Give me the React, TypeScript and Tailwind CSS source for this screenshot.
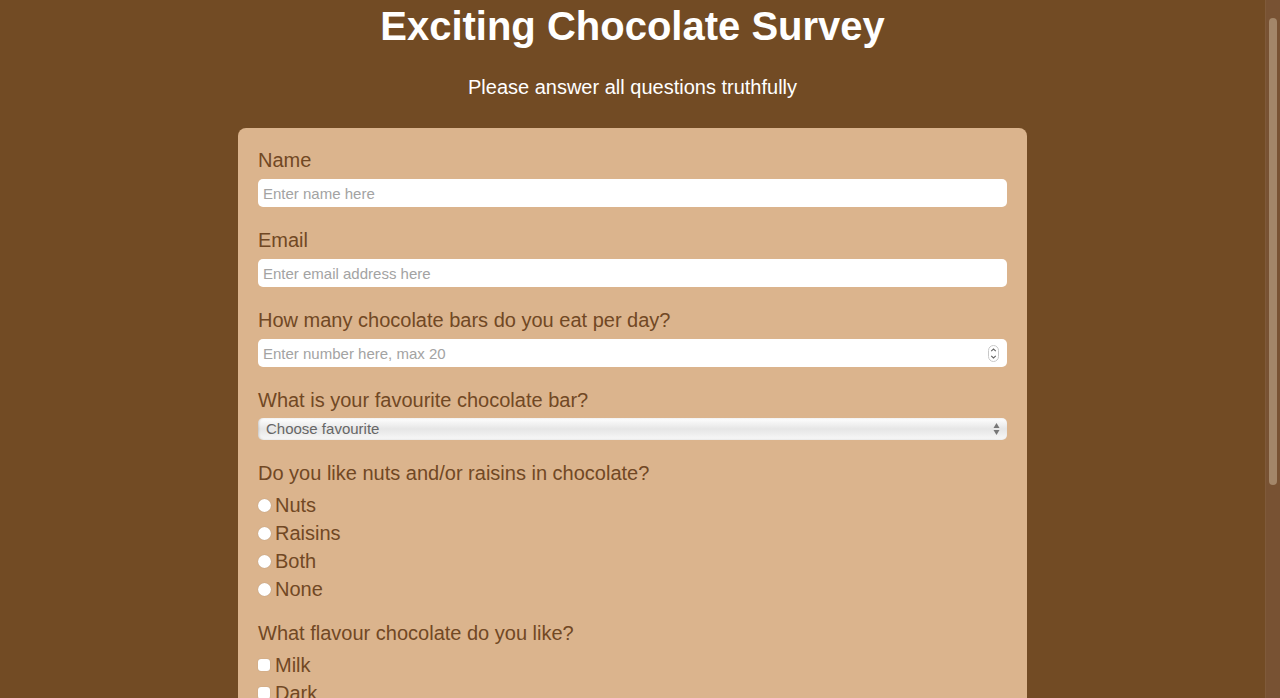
import React from 'react';

const font = { fontFamily: '"Liberation Sans", Arial, Helvetica, sans-serif' };

const Label = ({ children }: { children: React.ReactNode }) => (
  <label className="block h-[23px] text-[20px] leading-[25px] text-[#714824]">{children}</label>
);

const TextInput = ({ placeholder, spinner }: { placeholder: string; spinner?: boolean }) => (
  <div className="relative mt-2">
    <input
      type="text"
      placeholder={placeholder}
      className="block w-full h-7 rounded-[5px] bg-white pl-[5px] text-[15px] text-[#333] placeholder:text-[#a3a3a3] outline-none"
    />
    {spinner && (
      <svg className="absolute right-[8px] top-[6px]" width="11" height="17" viewBox="0 0 11 17">
        <rect x="0.5" y="0.5" width="10" height="16" rx="5" fill="#fff" stroke="#c8c8c8" />
        <path d="M3.2 6.2 L5.5 4 L7.8 6.2" fill="none" stroke="#666" strokeWidth="1.1" />
        <path d="M3.2 10.8 L5.5 13 L7.8 10.8" fill="none" stroke="#666" strokeWidth="1.1" />
      </svg>
    )}
  </div>
);

const Choice = ({ type, name, label }: { type: 'radio' | 'checkbox'; name: string; label: string }) => (
  <label className="flex h-7 items-center text-[20px] text-[#714824]">
    <input
      type={type}
      name={name}
      className={
        type === 'radio'
          ? 'appearance-none w-[13px] h-[13px] rounded-full bg-white shadow-[0_0_1px_rgba(0,0,0,0.25)] mr-[4px]'
          : 'appearance-none w-3 h-3 rounded-[3px] bg-white shadow-[0_0_1px_rgba(0,0,0,0.25)] mr-[5px]'
      }
    />
    {label}
  </label>
);

export default function App() {
  return (
    <div style={font} className="flex h-[698px] overflow-hidden bg-[#724b24]">
      <div className="flex-1 overflow-hidden">
        <h1 className="pt-[3px] text-center text-[40px] leading-[46px] font-bold text-white">Exciting Chocolate Survey</h1>
        <p className="mt-[27px] text-center text-[20px] leading-[23px] text-white">Please answer all questions truthfully</p>

        <form className="mx-auto mt-[29px] w-[789px] rounded-lg bg-[#dbb48d] px-5 pt-5 pb-5">
          <div>
            <Label>Name</Label>
            <TextInput placeholder="Enter name here" />
          </div>
          <div className="mt-[21px]">
            <Label>Email</Label>
            <TextInput placeholder="Enter email address here" />
          </div>
          <div className="mt-[21px]">
            <Label>How many chocolate bars do you eat per day?</Label>
            <TextInput placeholder="Enter number here, max 20" spinner />
          </div>
          <div className="mt-[21px]">
            <Label>What is your favourite chocolate bar?</Label>
            <div className="relative mt-[7px]">
              <select
                defaultValue=""
                className="block w-full h-[22px] appearance-none rounded-[5px] bg-linear-to-b from-white via-[#e6e6e6] to-[#f8f8f8] pl-2 text-[15px] text-[#666] shadow-[inset_1px_0_2px_rgba(0,0,0,0.15)] outline-none"
              >
                <option value="">Choose favourite</option>
                <option>Dairy Milk</option>
                <option>Mars</option>
                <option>Twix</option>
                <option>KitKat</option>
              </select>
              <svg className="pointer-events-none absolute right-[7px] top-[4px]" width="7" height="14" viewBox="0 0 7 14">
                <path d="M3.5 1 L6.5 6 L0.5 6 Z" fill="#777" />
                <path d="M3.5 13 L6.5 8 L0.5 8 Z" fill="#777" />
              </svg>
            </div>
          </div>
          <div className="mt-[21px]">
            <Label>Do you like nuts and/or raisins in chocolate?</Label>
            <div className="mt-[7px]">
              <Choice type="radio" name="extras" label="Nuts" />
              <Choice type="radio" name="extras" label="Raisins" />
              <Choice type="radio" name="extras" label="Both" />
              <Choice type="radio" name="extras" label="None" />
            </div>
          </div>
          <div className="mt-[18px]">
            <Label>What flavour chocolate do you like?</Label>
            <div className="mt-[7px]">
              <Choice type="checkbox" name="flavour" label="Milk" />
              <Choice type="checkbox" name="flavour" label="Dark" />
              <Choice type="checkbox" name="flavour" label="White" />
            </div>
          </div>
          <div className="mt-[18px]">
            <Label>Any other comments?</Label>
            <textarea
              placeholder="Enter comments here"
              className="mt-2 block w-full h-20 resize-none rounded-[5px] bg-white p-[5px] text-[15px] text-[#333] placeholder:text-[#a3a3a3] outline-none"
            />
          </div>
          <button type="button" className="mt-[21px] h-[30px] w-full rounded-[5px] bg-[#724b24] text-[18px] text-white">
            Submit
          </button>
        </form>
      </div>

      {/* window scrollbar */}
      <div className="w-[15px] shrink-0 border-l border-[#7f5a3a] bg-[#785233] pt-[18px]">
        <div className="mx-auto h-[467px] w-2 rounded-full bg-[#a38669]" />
      </div>
    </div>
  );
}
